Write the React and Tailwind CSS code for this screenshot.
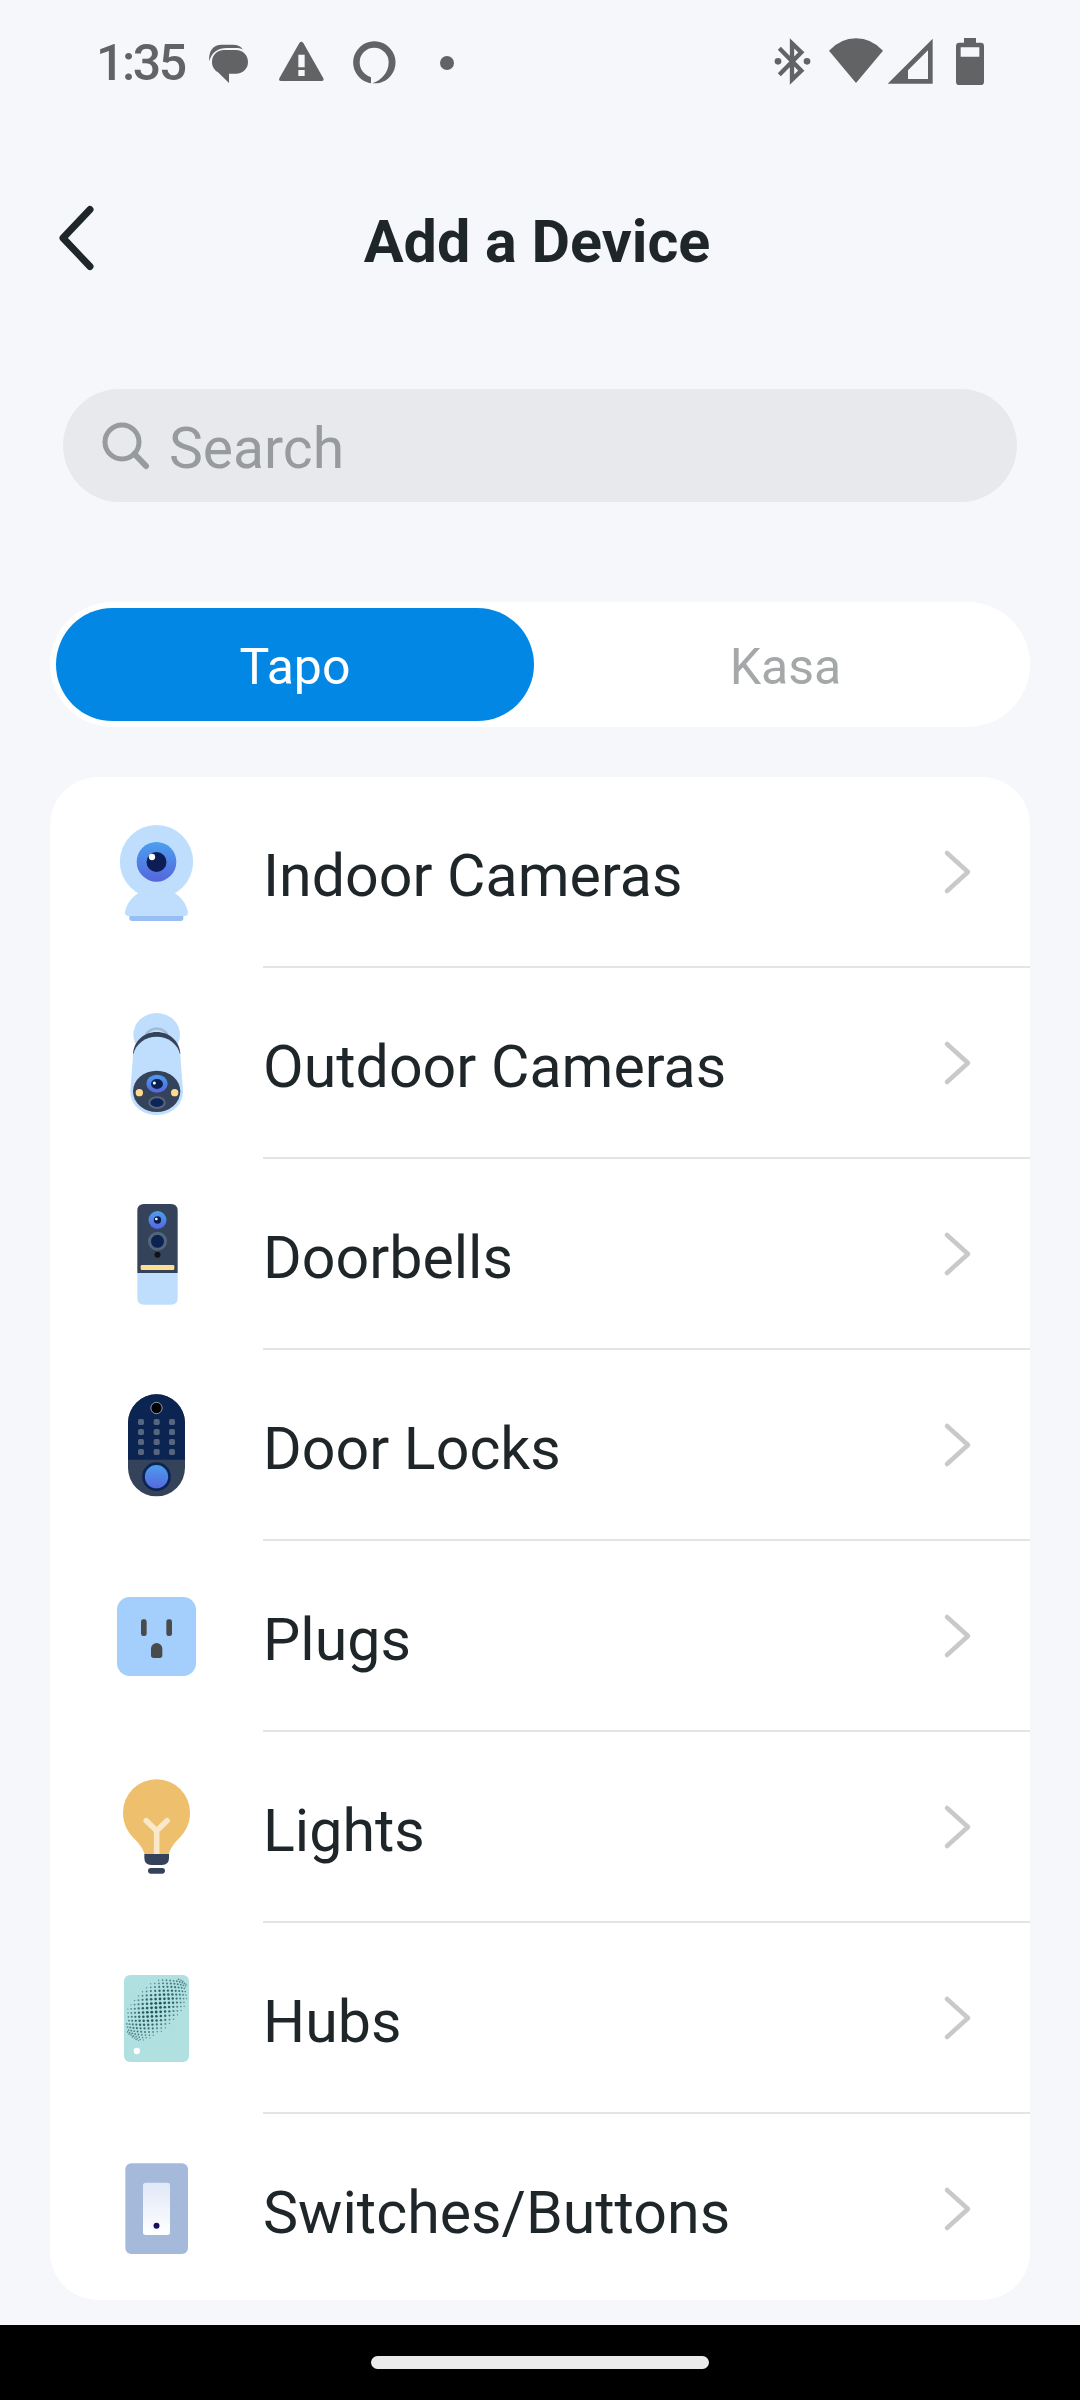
import { useState } from 'react'

const devices = [
  { name: 'Indoor Cameras', Icon: IndoorCamera },
  { name: 'Outdoor Cameras', Icon: OutdoorCamera },
  { name: 'Doorbells', Icon: Doorbell },
  { name: 'Door Locks', Icon: DoorLock },
  { name: 'Plugs', Icon: Plug },
  { name: 'Lights', Icon: Light },
  { name: 'Hubs', Icon: Hub },
  { name: 'Switches/Buttons', Icon: Switch },
]

// all device icons share one 3x canvas, y is where the drawing starts in the row
function DeviceIcon({ y, children }) {
  return (
    <svg className="w-[120px] h-[189px] shrink-0" viewBox="0 0 360 567">
      <g transform={`translate(0 ${y})`}>{children}</g>
    </svg>
  )
}

function LensGradient({ id }) {
  return (
    <linearGradient id={id} x1="0" y1="0" x2="0" y2="1">
      <stop offset="0" stopColor="#4c9fee" />
      <stop offset="1" stopColor="#5566dc" />
    </linearGradient>
  )
}

function IndoorCamera() {
  return (
    <DeviceIcon y={69}>
      <defs><LensGradient id="indoor" /></defs>
      <path d="M88 345h162v10q0 8-8 8H96q-8 0-8-8z" fill="#97bff3" />
      <path d="M115 279C95 292 80 312 75 336q-1 12 11 12h167q12 0 11-12C259 312 244 292 224 279z" fill="#bfdefe" />
      <circle cx="169.500" cy="185" r="110" fill="#bfdefe" />
      <circle cx="169.500" cy="185.500" r="59.500" fill="url(#indoor)" />
      <circle cx="169.500" cy="186" r="30" fill="#0d1e54" />
      <circle cx="156" cy="171" r="9.500" fill="#fff" />
    </DeviceIcon>
  )
}

function OutdoorCamera() {
  return (
    <DeviceIcon y={96}>
      <defs>
        <LensGradient id="outdoor" />
        <clipPath id="neck"><ellipse cx="170" cy="104" rx="70" ry="65" /></clipPath>
      </defs>
      <ellipse cx="170" cy="104" rx="70" ry="65" fill="#bfdefe" />
      <ellipse cx="170" cy="112" rx="33" ry="26" fill="none" stroke="#a3bcd5" strokeWidth="8" clipPath="url(#neck)" />
      <path d="M99 162C101 123 132 96 170 96s69 27 71 66z" fill="#34435a" />
      <path d="M99 166C106 131 136 110 170 110s64 21 71 56l8 108c0 42-34 71-79 71s-79-29-79-71z" fill="#bfdefe" />
      <ellipse cx="170" cy="274" rx="71" ry="62" fill="#34435a" />
      <ellipse cx="171" cy="251" rx="32" ry="27" fill="url(#outdoor)" />
      <ellipse cx="171" cy="252" rx="18" ry="15" fill="#0c2050" />
      <circle cx="163" cy="249" r="4.500" fill="#fff" />
      <circle cx="118" cy="278" r="11" fill="#fedb8c" />
      <circle cx="224" cy="278" r="11" fill="#fedb8c" />
      <ellipse cx="171" cy="308" rx="23" ry="16" fill="#0c2555" stroke="#56677c" strokeWidth="6" />
    </DeviceIcon>
  )
}

function Doorbell() {
  return (
    <DeviceIcon y={93}>
      <defs><LensGradient id="doorbell" /></defs>
      <path d="M112 248h121v76q0 20-20 20h-81q-20 0-20-20z" fill="#bfdefe" />
      <path d="M112 249V62q0-20 20-20h81q20 0 20 20v187z" fill="#34435a" />
      <circle cx="172.500" cy="90" r="27" fill="url(#doorbell)" />
      <circle cx="172.500" cy="90" r="11" fill="#0c1c4f" />
      <circle cx="169" cy="87" r="4" fill="#fff" />
      <circle cx="172.500" cy="154" r="24" fill="#0c2250" stroke="#53657b" strokeWidth="9" />
      <circle cx="172.500" cy="194.500" r="9" fill="#111214" />
      <rect x="122" y="225" width="101" height="15" rx="4" fill="#fedf91" />
    </DeviceIcon>
  )
}

function DoorLock() {
  return (
    <DeviceIcon y={90}>
      <defs><LensGradient id="lock" /></defs>
      <rect x="84" y="43" width="171" height="306" rx="85.500" fill="#34435a" />
      <path d="M84 239V128.500a85.500 85.500 0 0 1 171 0V239z" fill="#0c2452" />
      <circle cx="169.500" cy="84" r="17" fill="#000" stroke="#aab2c0" strokeWidth="2.500" />
      {[126, 156, 186, 216].map(y =>
        [123, 170, 216].map(x => <rect key={`${x}-${y}`} x={x - 9} y={y - 9} width="18" height="18" rx="5" fill="#56677d" />)
      )}
      <circle cx="169.500" cy="290" r="39" fill="url(#lock)" stroke="#0c2452" strokeWidth="8" />
    </DeviceIcon>
  )
}

function Plug() {
  return (
    <DeviceIcon y={117}>
      <rect x="51" y="51" width="237" height="237" rx="38" fill="#a4cffc" />
      <rect x="123" y="118" width="17" height="50" rx="7" fill="#4a4a4a" />
      <rect x="199" y="118" width="17" height="50" rx="7" fill="#4a4a4a" />
      <path d="M153 206a17 17 0 0 1 34 0v20q0 8-8 8h-18q-8 0-8-8z" fill="#4a4a4a" />
    </DeviceIcon>
  )
}

function Light() {
  return (
    <DeviceIcon y={99}>
      <path d="M134 268c-5-16-14-30-31-47C81 199 69 174 69 143a100.500 100.500 0 0 1 201 0c0 31-12 56-34 78-17 17-25 31-30 47z" fill="#eebf6d" />
      <path d="M170 268v-70M139 167l31 30 31-30" fill="none" stroke="#f9e8c9" strokeWidth="17" strokeLinecap="round" strokeLinejoin="round" />
      <path d="M133 267h74v12q0 21-21 21h-32q-21 0-21-21z" fill="#34435a" />
      <rect x="144" y="309" width="51" height="17" rx="8.500" fill="#34435a" />
    </DeviceIcon>
  )
}

// speaker grille: a bulged dot grid kept inside a tilted ellipse
const grille = []
for (let i = -12; i <= 12; i++) {
  for (let j = -12; j <= 12; j++) {
    const r2 = i * i + j * j
    const k = 1 - r2 * 0.002
    const x = 13.4 * i * k + j * 0.6
    const y = 13 * j * k - i * 0.6
    const along = (x - y) / Math.SQRT2
    const across = (x + y) / Math.SQRT2
    const d = (along / 126) ** 2 + (across / 66) ** 2
    if (d < 1 && r2 < 150) grille.push({ x: 168 + x, y: 143 + y, s: 8.5 - 4.5 * d, o: 1 - 0.5 * d })
  }
}

function Hub() {
  return (
    <DeviceIcon y={111}>
      <rect x="72" y="45" width="195" height="261" rx="18" fill="#b0e1e0" />
      {grille.filter(p => p.x > 80 && p.x < 260 && p.y > 58).map((p, i) => (
        <circle key={i} cx={p.x} cy={p.y} r={p.s / 2} fill="#1d5358" opacity={p.o} />
      ))}
      <circle cx="110.500" cy="273" r="9.500" fill="#fff" />
    </DeviceIcon>
  )
}

function Switch() {
  return (
    <DeviceIcon y={108}>
      <defs>
        <linearGradient id="switch" x1="0" y1="0" x2="0" y2="1">
          <stop offset="0" stopColor="#e0e8f7" />
          <stop offset="1" stopColor="#fff" />
        </linearGradient>
      </defs>
      <rect x="76" y="40" width="188" height="272" rx="18" fill="#a5b9db" />
      <rect x="129" y="98" width="81" height="157" rx="8" fill="url(#switch)" />
      <circle cx="169.500" cy="227.500" r="9" fill="#17105c" />
    </DeviceIcon>
  )
}

function StatusBar() {
  return (
    <div className="flex items-center h-[90px] mt-5 pl-[96px] pr-[94px] text-[#616365]">
      <span className="w-[110px] pb-[5px] text-[50px] font-medium leading-none tracking-[-2.4px] whitespace-nowrap">1:35</span>
      <svg className="w-[45px] h-[90px]" viewBox="378 0 135 270" fill="currentColor">
        <path d="M388 124c-3-28 9-50 38-50h32c15 0 25 5 31 15-7-4-14-5-22-5h-26c-27 0-46 12-53 40z" />
        <path d="M432 90h36c21 0 36 16 36 36s-15 35-36 35h-21v28l-33-32c-11-7-18-17-18-31 0-20 15-36 36-36z" />
      </svg>
      <svg className="w-[50px] h-[90px] ml-[26px]" viewBox="591 0 150 270" fill="currentColor" fillRule="evenodd">
        <path d="M658 69q6-7 12 0l60 106q3 8-5 8H603q-8 0-5-8zM655 104v38h19v-38zM655 150v18h19v-18z" />
      </svg>
      <svg className="w-[47px] h-[90px] ml-[24px]" viewBox="813 0 141 270" fill="currentColor">
        <path d="M873 190A63.500 63.500 0 1 1 893 190L877 190C902 182 926 160 926 127A43.500 43.500 0 1 0 839 127C839 150 854 165 873 172z" />
      </svg>
      <span className="size-[14px] rounded-full bg-[#616365] mb-[5px] ml-[42px]" />

      <svg className="w-[41px] h-[90px] ml-auto" viewBox="96 0 123 270" fill="none" stroke="currentColor">
        <path d="M118 85l66 67-28 27V70l28 27-66 67" strokeWidth="13" />
        <circle cx="114" cy="124" r="10" fill="currentColor" stroke="none" />
        <circle cx="201" cy="124" r="10" fill="currentColor" stroke="none" />
      </svg>
      <svg className="w-[58px] h-[90px] ml-[14px]" viewBox="261 0 174 270" fill="currentColor">
        <path d="M267 92q35-37 81-37t81 37l-81 97z" />
      </svg>
      <svg className="w-[47px] h-[90px] ml-[2px]" viewBox="441 0 141 270" fill="currentColor" fillRule="evenodd">
        <path d="M443 191L578 56v135zM504 151v26h60V91z" />
      </svg>
      <svg className="w-[32px] h-[90px] ml-[20px]" viewBox="642 0 96 270" fill="currentColor" fillRule="evenodd">
        <path d="M672 54h36v14h14q10 0 10 10v107q0 10-10 10h-64q-10 0-10-10V78q0-10 10-10h14zM662 82v28h56V82z" />
      </svg>
    </div>
  )
}

export default function App() {
  const [tab, setTab] = useState('Tapo')

  return (
    <div className="flex flex-col w-[1080px] h-[2400px] bg-[#f5f7fb] font-[Roboto,sans-serif] text-[#1f2629] overflow-hidden">
      <StatusBar />

      <header className="grid grid-cols-[110px_1fr_116px] items-center h-[84px] mt-[86px]">
        <button className="pl-[56px]">
          <svg className="w-[40px] h-[68px]" viewBox="0 0 40 68" fill="none" stroke="currentColor" strokeWidth="7" strokeLinecap="round" strokeLinejoin="round">
            <path d="M34 5.500L7 34 34 62.500" />
          </svg>
        </button>
        <h1 className="pt-[7px] text-center text-[59.3px] font-bold leading-none">Add a Device</h1>
      </header>

      <div className="flex items-center h-[113px] mt-[109px] mx-[63px] pl-[39px] rounded-full bg-[#e8e9ed] text-[#989b9e]">
        <svg className="w-[48px] h-[48px]" viewBox="0 0 48 48" fill="none" stroke="currentColor" strokeWidth="5">
          <circle cx="20" cy="20" r="17" />
          <path d="M32.500 32L44 44" strokeWidth="6" strokeLinecap="round" />
        </svg>
        <span className="pt-[6px] ml-[19px] text-[57px] leading-none">Search</span>
      </div>

      <div className="flex h-[125px] mt-[100px] mx-[50px] p-[6px] rounded-full bg-white">
        {['Tapo', 'Kasa'].map(t => (
          <button key={t} onClick={() => setTab(t)}
            className={`w-[478px] shrink-0 rounded-full pt-[4px] text-[50px] leading-none ${tab === t ? 'bg-[#0288e4] text-white' : 'pl-[25px] text-[#a5a8a9]'}`}>
            {t}
          </button>
        ))}
      </div>

      <ul className="mt-[50px] mx-[50px] h-[1523px] shrink-0 rounded-[48px] bg-white overflow-hidden">
        {devices.map(({ name, Icon }, i) => (
          <li key={name} className="flex h-[191px] pl-[50px]">
            <Icon />
            <div className={`flex flex-1 items-center ml-[43px] pr-[56px] border-b-2 ${i < devices.length - 1 ? 'border-[#e3e4e6]' : 'border-transparent'}`}>
              <span className="pt-[9px] text-[59.1px] leading-none">{name}</span>
              <svg className="w-[32px] h-[46px] ml-auto" viewBox="0 0 32 46" fill="none" stroke="#c7c9ca" strokeWidth="4.500" strokeLinecap="round" strokeLinejoin="round">
                <path d="M5 4l21 19L5 42" />
              </svg>
            </div>
          </li>
        ))}
      </ul>

      <div className="flex justify-center items-center h-[75px] mt-auto shrink-0 bg-black">
        <div className="w-[338px] h-[13px] rounded-full bg-[#ebebeb]" />
      </div>
    </div>
  )
}
